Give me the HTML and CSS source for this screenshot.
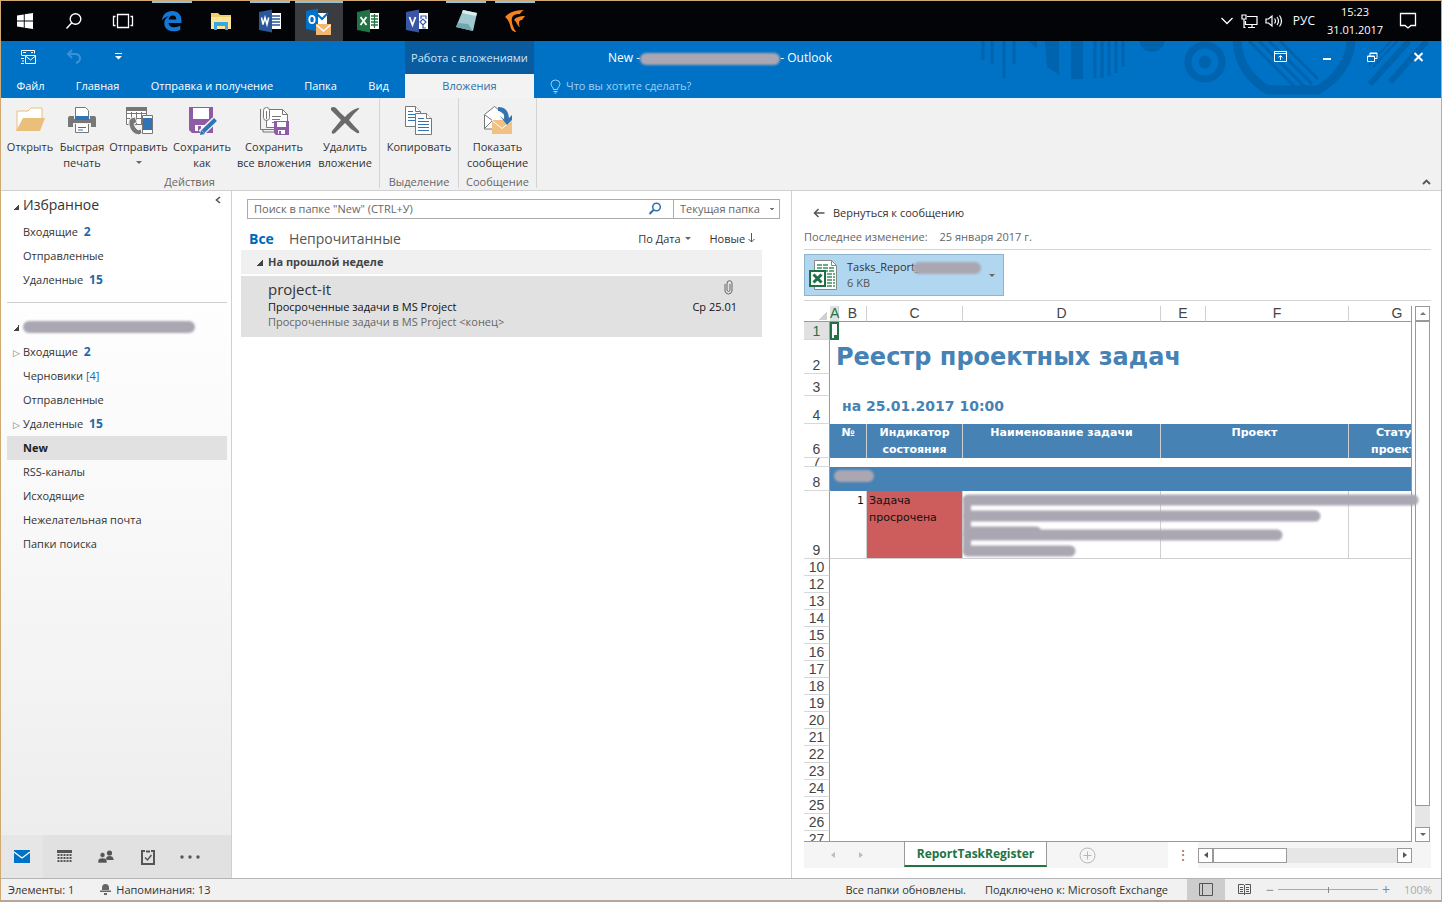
FILE: index.html
```html
<!DOCTYPE html>
<html lang="ru">
<head>
  <meta charset="UTF-8">
  <meta name="viewport" content="width=device-width, initial-scale=1.0">
  <title>New - Outlook</title>
  <link rel="stylesheet" href="styles.css">
</head>
<body>

  <!-- Windows taskbar -->
  <div class="taskbar">
    <div class="apps">
      <button class="app" aria-label="Пуск"><svg width="18" height="18" viewBox="0 0 18 18" fill="#fff"><path d="M1 3.400l6.800-1v6.100H1zM8.700 2.200L17 1v7.500H8.700zM1 9.500h6.800v6.100L1 14.600zM8.700 9.500H17V17l-8.300-1.200z"/></svg></button>
      <button class="app" aria-label="Поиск"><svg width="18" height="18" viewBox="0 0 18 18" fill="none" stroke="#fff" stroke-width="1.400"><circle cx="10.500" cy="7" r="5.300"/><path d="M6.800 10.800L1.500 16.500"/></svg></button>
      <button class="app" aria-label="Представление задач"><svg width="22" height="16" viewBox="0 0 22 16" fill="none" stroke="#fff" stroke-width="1.300"><path d="M5.500 1.500h11v13h-11zM3.500 3.500H1.500v9h2M18.500 3.500h2v9h-2"/></svg></button>
      <button class="app open" aria-label="Edge"><svg width="22" height="22" viewBox="0 0 22 22"><path fill="#1479d6" d="M1 10.500C1.600 4.500 5.600 1 11.200 1 17 1 20.500 5 20.500 10.300V13H7.600c.2 3 2.800 4.300 5.700 4.300 2.300 0 4.200-.6 6-1.700v4.100c-2 1.200-4.300 1.600-6.800 1.600C7 21.300 3.300 18 3.300 13.200c0-3 1.700-5.600 4.500-7C4.800 6.700 2.500 8 1 10.500zM7.700 9.500h7.600c0-2.400-1.200-3.900-3.500-3.900-2.200 0-3.700 1.600-4.100 3.900z"/></svg></button>
      <button class="app" aria-label="Проводник"><svg width="22" height="20" viewBox="0 0 22 20"><path fill="#f3ce6c" d="M1 2h7l2 2h11v14H1z"/><path fill="#ffe69b" d="M1 6h20v12H1z"/><path fill="#38a9de" d="M4 11h14v8h-3v-4H7v4H4z"/></svg></button>
      <button class="app open" aria-label="Word"><svg width="24" height="24" viewBox="0 0 24 24"><path fill="#fff" d="M12 4h11v16H12z"/><path stroke="#2b579a" stroke-width="1.300" d="M14 7h8M14 10h8M14 13h8M14 16h8"/><path fill="#2b579a" d="M1 3l13-2.500v23L1 21z"/><path fill="none" stroke="#fff" stroke-width="1.500" d="M3.500 8.500l1.500 7 2-7 2 7 1.700-7"/></svg></button>
      <button class="app open active" aria-label="Outlook"><svg width="28" height="28" viewBox="0 0 28 28"><path fill="#fff" d="M12 6h10v11H12z"/><path fill="none" stroke="#0072c6" stroke-width="2" d="M12 7l5 5 6-6"/><path fill="#0072c6" d="M1 4l12-2.500v23L1 22z"/><ellipse cx="7" cy="12.500" rx="2.700" ry="3.600" fill="none" stroke="#fff" stroke-width="1.800"/><path fill="#f2b872" d="M11 17h15v11H11z"/><path fill="none" stroke="#fff" stroke-width="1.500" d="M11.500 18l7 6 7-6"/></svg></button>
      <button class="app" aria-label="Excel"><svg width="24" height="24" viewBox="0 0 24 24"><path fill="#fff" d="M12 4h11v16H12z"/><path stroke="#217346" stroke-width="1.300" d="M15 7h7M15 10h7M15 13h7M15 16h7M18.500 5v14"/><path fill="#217346" d="M1 3l13-2.500v23L1 21z"/><path stroke="#fff" stroke-width="1.800" d="M4.500 8l6 8M10.500 8l-6 8"/></svg></button>
      <button class="app" aria-label="Visio"><svg width="24" height="24" viewBox="0 0 24 24"><path fill="#fff" d="M12 4h11v16H12z"/><path fill="none" stroke="#3955a3" stroke-width="1.200" d="M15 13l3-3 3 3-3 3zM16 10V7h5v3M18 16v3h3"/><path fill="#3955a3" d="M1 3l13-2.500v23L1 21z"/><path fill="none" stroke="#fff" stroke-width="1.800" d="M4.500 8l3 8 3-8"/></svg></button>
      <button class="app open" aria-label="Блокнот"><svg width="24" height="24" viewBox="0 0 24 24"><path fill="#9fc9cf" d="M9 1l14 3-4 18-17-4z"/><path fill="#d9eff0" d="M9 1l14 3-1 3L8 4z"/><path fill="#6fa5ae" d="M4 14l10 1 5 7-17-4z"/></svg></button>
      <button class="app open" aria-label="Приложение"><svg width="22" height="25" viewBox="0 0 22 25" fill="#f58220"><path d="M1 8C5 3 12 1 20 1c-2 1-3 2-4 4-5 0-7 1-8 4-1 5 1 9 4 14-3 0-5-2-6-7C5 13 4 10 1 8z"/><path d="M10 11c2-3 6-4 11-4l-3 4c-2 0-3 1-3 3 0 1 0 2 1 4-3-1-3-5-6-7z"/></svg></button>
    </div>
    <div class="tray">
      <svg width="14" height="8" viewBox="0 0 14 8" fill="none" stroke="#fff" stroke-width="1.300"><path d="M1.500 1L7 6.500 12.500 1"/></svg>
      <svg width="17" height="15" viewBox="0 0 17 15" fill="none" stroke="#fff" stroke-width="1.200"><path d="M6 2.500h10v8H4.500V7M11 10.500v3M7 13.500h7M1 1h4v4H1zM3 5v8.500h1.500"/></svg>
      <svg width="18" height="14" viewBox="0 0 18 14" fill="none" stroke="#fff" stroke-width="1.200"><path d="M1 5h2.500L7 2v10L3.500 9H1zM9.500 4.500q2 2.500 0 5M12 3q3 4 0 8M14.500 1.500q4 5.500 0 11"/></svg>
      <span class="lang">РУС</span>
      <time class="clock">15:23<br>31.01.2017</time>
      <svg width="18" height="18" viewBox="0 0 18 18" fill="none" stroke="#fff" stroke-width="1.300"><path d="M1.500 1.500h15v12h-4.500L9 16l-3-2.500H1.500z"/></svg>
    </div>
  </div>

  <!-- Window title and ribbon tabs -->
  <header class="titlebar">
    <svg class="pattern" width="462" height="57" viewBox="0 0 462 57" fill="none" stroke="#0063ae">
      <path stroke-width="3" d="M4 0v19M13 0v23M25 0v37M35 0v23M116 0v37M123 0v37M130 0v35M137 0v32M144 0v26"/>
      <path fill="#0063ae" stroke="none" d="M50 0l8 8V0zM66 0h14v34L68 26zM92 0h12v38H92zM160 0h26q-3 11-13 11T160 0z"/>
      <circle cx="226" cy="21" r="17" stroke-width="7"/><circle cx="226" cy="21" r="6" fill="#0063ae"/>
      <path stroke-width="9" d="M258 0q2 32 31 49h50Q370 30 372 0"/>
      <path stroke-width="3" d="M270 0l46 46M280 0l46 46M290 0l43 43M301 0l38 38"/>
      <path stroke-width="6" d="M430 0l-39 43M448 0l-37 41"/><path stroke-width="2" d="M418 0l-24 26M412 0l-22 24"/>
    </svg>
    <div class="title-row">
      <div class="quick-access">
        <button aria-label="Отправить и получить"><svg width="17" height="16" viewBox="0 0 17 16" fill="none" stroke="#fff"><path d="M1.500 6.500v-5h13v3M3 3.500h3M11 3.500h2M5.500 6.500h10v8h-10zM5.500 7l5 4 5-4M1 9.500h3M2 12h2M1 14.500h3M2 6.500h3"/></svg></button>
        <button aria-label="Отменить"><svg width="16" height="15" viewBox="0 0 16 15" fill="none" stroke="#3c91d4" stroke-width="2"><path d="M6 1L2 5l4 4M2.500 5H9q5 0 5 4.500 0 3-4 4.500"/></svg></button>
        <button aria-label="Настройка панели"><svg width="7" height="7" viewBox="0 0 7 7" fill="#fff"><path d="M0 0h7v1H0zM0 3h7L3.500 6.500z"/></svg></button>
      </div>
      <div class="context-title">Работа с вложениями</div>
      <h1 class="window-title">New - <span class="smudge"></span> - Outlook</h1>
      <div class="window-controls">
        <button aria-label="Параметры ленты"><svg width="13" height="11" viewBox="0 0 13 11" fill="none" stroke="#fff"><path d="M.5.500h12v10H.5zM1 2.500h11M6.500 9V5M4.500 6.500l2-2 2 2"/></svg></button>
        <button aria-label="Свернуть"><svg width="10" height="10" viewBox="0 0 10 10"><path stroke="#fff" stroke-width="2" d="M1 7h8"/></svg></button>
        <button aria-label="Восстановить"><svg width="11" height="10" viewBox="0 0 11 10" fill="none" stroke="#fff"><path d="M.5 4h7v5.500h-7zM.5 4.500h7M3 4V1h7v5.500H7.500M3 1.500h7"/></svg></button>
        <button aria-label="Закрыть"><svg width="11" height="10" viewBox="0 0 11 10"><path stroke="#fff" stroke-width="2" d="M1.500 1l8 8M9.500 1l-8 8"/></svg></button>
      </div>
    </div>
    <nav class="tabs">
      <button>Файл</button>
      <button>Главная</button>
      <button>Отправка и получение</button>
      <button>Папка</button>
      <button>Вид</button>
      <button class="current">Вложения</button>
      <button class="hint"><svg width="11" height="15" viewBox="0 0 11 15" fill="none" stroke="#9fd0f2"><path d="M3.500 10.500Q3.500 9 2 7.500 1 6 1 4.500 1.500 1 5.500 1T10 4.500Q10 6 9 7.500 7.500 9 7.500 10.500zM3.500 12.500h4M4.500 14h2"/></svg>Что вы хотите сделать?</button>
    </nav>
  </header>

  <!-- Ribbon -->
  <div class="ribbon">
    <section class="group">
      <div class="actions">
        <button><svg width="32" height="32" viewBox="0 0 32 32"><path fill="#fff" stroke="#eabf7c" d="M3 27V7h11l3-3h11v10"/><path fill="#eabf7c" d="M2 27l7-13h22l-5 13z"/></svg>Открыть</button>
        <button><svg width="32" height="32" viewBox="0 0 32 32"><path fill="#fff" stroke="#777" d="M9.500 3.500h10l3 3v8h-13z"/><path fill="#777" d="M4 12h4v3h16v-3h4q2 0 2 2v9h-5v-4H7v4H2v-9q0-2 2-2z"/><path fill="#2f75b5" d="M9 12h14v4H9z"/><path fill="#fff" stroke="#777" d="M9.500 20v8.500h13V20"/><path stroke="#2f75b5" d="M12 23.500h8M12 26h5"/></svg>Быстрая печать</button>
        <button><svg width="32" height="32" viewBox="0 0 32 32"><path fill="#fff" stroke="#777" d="M3.500 4.500h20v16h-20z"/><path stroke="#777" d="M3 9.500h20M3 14.500h20M8.500 8v12M13.500 8v12M18.500 8v12"/><path fill="#777" d="M3 3h21v4H3z"/><path fill="#777" stroke="#f1f1f1" d="M8 14l4-1 2 5-3 2q1 4 4 6l3-1 1 4-3 2Q8 30 6 21q-1-5 2-7z"/><path fill="#fff" stroke="#777" d="M19.500 11.500h10v18h-10z"/><path fill="#2f75b5" d="M20 14h9v12h-9z"/></svg>Отправить <i class="arrow"></i></button>
        <button><svg width="32" height="32" viewBox="0 0 32 32"><path fill="#8e5ba6" d="M3 3h24v26H6l-3-3z"/><path fill="#fff" d="M7 4h16v11H7zM9 21h12v6H9z"/><path fill="#8e5ba6" d="M12 22h3v5h-3z"/><path stroke="#f1f1f1" stroke-width="7" d="M15 29L30 15"/><path stroke="#2f75b5" stroke-width="4" d="M17 27.500L29.500 15.500"/><path fill="#2f75b5" d="M14 31l1-5 4 4z"/></svg>Сохранить как</button>
        <button><svg width="32" height="32" viewBox="0 0 32 32" fill="none" stroke="#777"><path fill="#fff" d="M8.500 5.500h16l5 5v13h-21z"/><path d="M24.500 5.500v5h5M14 12.500h9M14 15.500h8M14 18.500h3M2.500 5v20.500h14M5 25v3h11"/><rect x="5.500" y="3.500" width="6" height="13" rx="3" fill="#fff"/><path d="M8.500 7v8"/><path fill="#8e5ba6" stroke="none" d="M16 17h15v14H18l-2-2z"/><path fill="#fff" stroke="none" d="M19 18h9v5h-9zM20 26h7v4h-7z"/><path fill="#8e5ba6" stroke="none" d="M21 27h2v3h-2z"/></svg>Сохранить<br>все вложения</button>
        <button><svg width="32" height="32" viewBox="0 0 32 32" fill="#6a6a6a"><path d="M2 4q2-2 5 0 4 5 9 9Q22 6 29 4q2 0 1 1-6 5-10 11 5 6 10 11 1 3-2 2-7-4-12-10Q10 25 6 29q-4 2-3-2 5-6 9-11Q6 10 2 6z"/></svg>Удалить вложение</button>
      </div>
      <h2>Действия</h2>
    </section>
    <section class="group">
      <div class="actions">
        <button><svg width="32" height="32" viewBox="0 0 32 32" fill="#fff" stroke="#777"><path d="M2.500 2.500h10l5 5v15h-15z"/><path d="M12.500 2.500v5h5"/><path stroke="#2f75b5" d="M5 7.500h5M5 10.500h8M5 13.500h8M5 16.500h8"/><path d="M12.500 9.500h11l5 5v16h-16z"/><path d="M23.500 9.500v5h5"/><path stroke="#2f75b5" d="M15 14.500h6M15 17.500h11M15 20.500h11M15 23.500h11M15 26.500h11"/></svg>Копировать</button>
      </div>
      <h2>Выделение</h2>
    </section>
    <section class="group">
      <div class="actions">
        <button><svg width="32" height="32" viewBox="0 0 32 32"><path fill="#fff" stroke="#777" d="M2.500 25V10.500l10-8 10 8V25z"/><path fill="none" stroke="#777" d="M3 11l8 6M3 24l8-8"/><path fill="#f0c183" d="M10 16h20v14H10z"/><path fill="none" stroke="#fff" d="M10 16.500l10 8 10-8"/><path fill="none" stroke="#2f75b5" stroke-width="4" d="M16 5q9 0 9 11"/><path fill="#2f75b5" d="M18 12l5 4h2l5-5v5l-5 5z"/></svg>Показать сообщение</button>
      </div>
      <h2>Сообщение</h2>
    </section>
    <button class="collapse" aria-label="Свернуть ленту"><svg width="9" height="6" viewBox="0 0 9 6" fill="none" stroke="#555" stroke-width="1.800"><path d="M1 5l3.500-3.500L8 5"/></svg></button>
  </div>

  <main class="panes">
    <!-- Folders -->
    <aside class="folders">
      <button class="hide-pane" aria-label="Свернуть область папок"><svg width="6" height="8" viewBox="0 0 6 8" fill="none" stroke="#555" stroke-width="1.600"><path d="M5 1L1.500 4 5 7"/></svg></button>
      <div class="folder-tree">
        <h2 class="expanded">Избранное</h2>
        <ul>
          <li><a href="#">Входящие <b>2</b></a></li>
          <li><a href="#">Отправленные</a></li>
          <li><a href="#">Удаленные <b>15</b></a></li>
        </ul>
        <hr>
        <h2 class="expanded account"><span class="smudge"></span></h2>
        <ul>
          <li class="closed"><a href="#">Входящие <b>2</b></a></li>
          <li><a href="#">Черновики <span class="count">[4]</span></a></li>
          <li><a href="#">Отправленные</a></li>
          <li class="closed"><a href="#">Удаленные <b>15</b></a></li>
          <li class="selected"><a href="#">New</a></li>
          <li><a href="#">RSS-каналы</a></li>
          <li><a href="#">Исходящие</a></li>
          <li><a href="#">Нежелательная почта</a></li>
          <li><a href="#">Папки поиска</a></li>
        </ul>
      </div>
      <nav class="modules">
        <button class="on" aria-label="Почта"><svg width="16" height="13" viewBox="0 0 16 13"><path fill="#0072c6" d="M0 0h16v13H0z"/><path fill="none" stroke="#fff" stroke-width="1.300" d="M0 2l8 6 8-6"/></svg></button>
        <button aria-label="Календарь"><svg width="15" height="13" viewBox="0 0 15 13"><path fill="#555" d="M0 0h15v3H0z"/><path stroke="#555" stroke-width="2" stroke-dasharray="2 1" d="M.5 5h14M.5 8h14M.5 11h14"/></svg></button>
        <button aria-label="Люди"><svg width="16" height="13" viewBox="0 0 16 13" fill="#555"><circle cx="11.500" cy="3" r="2.600"/><path d="M8 9q0-3 3.500-3T15.500 9v1H8z"/><circle cx="4.500" cy="5" r="2.500" stroke="#e1e1e1" stroke-width=".6"/><path d="M0 13v-2q0-3 4.500-3T9 11v2z" stroke="#e1e1e1" stroke-width=".6"/></svg></button>
        <button aria-label="Задачи"><svg width="14" height="16" viewBox="0 0 14 16" fill="none" stroke="#555" stroke-width="2"><path d="M4 2H1v13h12V2h-3"/><path d="M5 2.500h4"/><path stroke-width="1.500" d="M4 8.500l2.500 2.500 4-5"/></svg></button>
        <button aria-label="Ещё"><svg width="20" height="4" viewBox="0 0 20 4" fill="#555"><circle cx="2" cy="2" r="1.700"/><circle cx="10" cy="2" r="1.700"/><circle cx="18" cy="2" r="1.700"/></svg></button>
      </nav>
    </aside>

    <!-- Message list -->
    <section class="messages">
      <form class="search">
        <input type="search" aria-label="Поиск" placeholder='Поиск в папке "New" (CTRL+У)'>
        <button type="button" aria-label="Найти"><svg width="14" height="14" viewBox="0 0 14 14" fill="none" stroke="#2f6fb0" stroke-width="1.500"><circle cx="8.500" cy="5" r="3.800"/><path stroke-width="2" d="M5.500 8L1.500 12"/></svg></button>
        <select aria-label="Область поиска"><option>Текущая папка</option></select>
      </form>
      <div class="filters">
        <button class="all">Все</button>
        <button class="unread">Непрочитанные</button>
        <button class="sort">По Дата <i class="arrow"></i></button>
        <button class="order">Новые <svg width="7" height="10" viewBox="0 0 7 10" fill="none" stroke="#555"><path d="M3.500 0v9M.5 6l3 3 3-3"/></svg></button>
      </div>
      <h3 class="expanded">На прошлой неделе</h3>
      <article class="message">
        <div class="sender">project-it <svg width="9" height="15" viewBox="0 0 9 15" fill="none" stroke="#666"><path d="M6 4v6.500q-1.500 2-3 0V3q.2-2.300 2.500-2.300T8 3v8q-.5 3-3.500 3T1 11V4"/></svg></div>
        <div class="subject">Просроченные задачи в MS Project <time>Ср 25.01</time></div>
        <div class="snippet">Просроченные задачи в MS Project &lt;конец&gt;</div>
      </article>
    </section>

    <!-- Attachment preview -->
    <section class="preview">
      <button class="back"><svg width="12" height="10" viewBox="0 0 12 10" fill="none" stroke="#555" stroke-width="1.500"><path d="M11.500 5H1.500M5.500 1l-4 4 4 4"/></svg>Вернуться к сообщению</button>
      <p class="changed"><span>Последнее изменение:</span><span>25 января 2017 г.</span></p>
      <div class="attachments">
        <button class="file">
          <svg width="30" height="32" viewBox="0 0 30 32"><path fill="#fff" stroke="#888" d="M5.500 1.500h17l5 5v24h-22z"/><path fill="none" stroke="#888" d="M22.500 1.500v5h5"/><path stroke="#6dab86" stroke-width="2" stroke-dasharray="5 1" d="M8 6h12M8 9h18M14 12h12M18 15h8M18 18h8M18 21h8M18 24h8M18 27h8"/><path fill="#fff" stroke="#1e7145" stroke-width="2" d="M1 12h15v15H1z"/><path stroke="#1e7145" stroke-width="3" d="M4.500 15.500l8 8M12.500 15.500l-8 8"/></svg>
          <span class="file-name">Tasks_Report_<span class="smudge"></span><small>6 KB</small></span>
          <i class="arrow"></i>
        </button>
      </div>
      <div class="workbook">
        <div class="sheet">
          <table>
            <colgroup><col class="c-num"><col class="c-a"><col class="c-b"><col class="c-c"><col class="c-d"><col class="c-e"><col class="c-f"><col class="c-g"></colgroup>
            <thead>
              <tr><th class="corner"></th><th class="picked">A</th><th>B</th><th>C</th><th>D</th><th>E</th><th>F</th><th>G</th></tr>
            </thead>
            <tbody>
              <tr class="r1"><th class="picked">1</th><td class="cursor"></td><td colspan="6"></td></tr>
              <tr class="r2"><th>2</th><td class="report-title" colspan="7">Реестр проектных задач</td></tr>
              <tr class="r3"><th>3</th><td colspan="7"></td></tr>
              <tr class="r4"><th>4</th><td class="report-date" colspan="7">на 25.01.2017 10:00</td></tr>
              <tr class="r6 heads"><th>6</th><td colspan="2">№</td><td>Индикатор состояния</td><td>Наименование задачи</td><td colspan="2">Проект</td><td>Статус<br>проекта</td></tr>
              <tr class="r7"><th><div>7</div></th><td colspan="7"></td></tr>
              <tr class="r8"><th>8</th><td class="band" colspan="7"><span class="smudge"></span></td></tr>
              <tr class="r9"><th>9</th><td class="number" colspan="2">1</td><td class="overdue">Задача просрочена</td><td></td><td colspan="2"></td><td></td></tr>
              <tr><th>10</th><td colspan="7"></td></tr>
              <tr><th>12</th><td colspan="7"></td></tr>
              <tr><th>13</th><td colspan="7"></td></tr>
              <tr><th>14</th><td colspan="7"></td></tr>
              <tr><th>15</th><td colspan="7"></td></tr>
              <tr><th>16</th><td colspan="7"></td></tr>
              <tr><th>17</th><td colspan="7"></td></tr>
              <tr><th>18</th><td colspan="7"></td></tr>
              <tr><th>19</th><td colspan="7"></td></tr>
              <tr><th>20</th><td colspan="7"></td></tr>
              <tr><th>21</th><td colspan="7"></td></tr>
              <tr><th>22</th><td colspan="7"></td></tr>
              <tr><th>23</th><td colspan="7"></td></tr>
              <tr><th>24</th><td colspan="7"></td></tr>
              <tr><th>25</th><td colspan="7"></td></tr>
              <tr><th>26</th><td colspan="7"></td></tr>
              <tr><th>27</th><td colspan="7"></td></tr>
            </tbody>
          </table>
        </div>
        <div class="v-scroll">
          <button aria-label="Вверх"><i class="up"></i></button>
          <div class="v-thumb"></div>
          <button aria-label="Вниз"><i class="down"></i></button>
        </div>
        <svg class="strokes" width="620" height="70" viewBox="0 0 620 70" fill="none" stroke="#aaa7b3" stroke-width="11" stroke-linecap="round" stroke-linejoin="round"><path d="M164 12h445M164 28h347M164 47h309M164 63h102M164 44h68"/><path stroke-width="8" d="M163 12v50"/></svg>
      </div>
      <div class="sheet-tabs">
        <div class="sheet-nav"><i class="left"></i><i class="right"></i></div>
        <button class="sheet-tab">ReportTaskRegister</button>
        <button class="add-sheet" aria-label="Новый лист"><svg width="17" height="17" viewBox="0 0 17 17" fill="none" stroke="#b5b5b5"><circle cx="8.500" cy="8.500" r="7.500"/><path d="M8.500 4.500v8M4.500 8.500h8"/></svg></button>
        <span class="grip">⋮</span>
        <div class="h-scroll">
          <button aria-label="Влево"><i class="left"></i></button>
          <div class="h-track"><div class="h-thumb"></div></div>
          <button aria-label="Вправо"><i class="right"></i></button>
        </div>
      </div>
    </section>
  </main>

  <footer class="statusbar">
    <span>Элементы: 1</span>
    <span class="reminders"><svg width="11" height="11" viewBox="0 0 11 11" fill="#666"><path d="M2 6V4q0-4 3.500-4T9 4v2zM0 6.500h11V8H0zM4 9h3v2H4z"/></svg>Напоминания: 13</span>
    <span class="sync">Все папки обновлены.</span>
    <span>Подключено к: Microsoft Exchange</span>
    <div class="views">
      <button class="on" aria-label="Обычный"><svg width="14" height="13" viewBox="0 0 14 13" fill="none" stroke="#555"><path d="M.5.500h13v12H.5zM3.500 0v13"/></svg></button>
      <button aria-label="Чтение"><svg width="13" height="13" viewBox="0 0 13 13" fill="none" stroke="#555"><path d="M.5 1.500h5l1 1 1-1h5v9h-5l-1 1-1-1h-5zM6.500 2v10M2 4.500h3M2 6.500h3M2 8.500h3M8 4.500h3M8 6.500h3M8 8.500h3"/></svg></button>
    </div>
    <div class="zoom">
      <button>−</button>
      <input type="range" aria-label="Масштаб" disabled>
      <button>+</button>
      <span>100%</span>
    </div>
  </footer>

</body>
</html>
```

FILE: styles.css
```css
* {
  margin: 0;
  padding: 0;
  box-sizing: border-box;
}

body {
  height: 100vh;
  display: flex;
  flex-direction: column;
  border: 1px solid #d0a871;
  border-bottom: 2px solid #b5a59a;
  background-color: #fff;
  font-family: "Open Sans", "Noto Sans", sans-serif;
  font-size: 11px;
  line-height: 16px;
  color: #333;
  overflow: hidden;
}

button, input, select {
  font: inherit;
  color: inherit;
  background: none;
  border: none;
}

a {
  color: inherit;
  text-decoration: none;
}

ul {
  list-style: none;
}

/* Blurred-out private text */
.smudge {
  display: inline-block;
  height: 12px;
  border-radius: 6px;
  background-color: #aaa7b3;
  filter: blur(1px);
  vertical-align: middle;
}

/* Small triangles */
.arrow, .down, .up, .left, .right {
  display: inline-block;
  border: 3px solid transparent;
}

.arrow, .down {
  border-top-color: #666;
  border-bottom-width: 0;
}

.up {
  border-bottom-color: #777;
  border-top-width: 0;
}

.left {
  border-right: 4px solid #555;
  border-left-width: 0;
}

.right {
  border-left: 4px solid #555;
  border-right-width: 0;
}

/* Taskbar */
.taskbar {
  display: flex;
  justify-content: space-between;
  height: 40px;
  flex-shrink: 0;
  background-color: #020407;
  color: #fff;
}

.apps {
  display: flex;
  gap: 1px;
}

.app {
  width: 48px;
  display: flex;
  align-items: center;
  justify-content: center;
}

.app.open {
  background: linear-gradient(#8fc0e0, #8fc0e0) center top / 40px 2px no-repeat;
}

.app.active {
  background: linear-gradient(#8fc0e0, #8fc0e0) center top / 48px 2px no-repeat #3a3c3f;
}

.tray {
  display: flex;
  align-items: center;
  gap: 7px;
  padding-right: 24px;
}

.lang {
  margin-left: 3px;
  font-size: 12px;
}

.clock {
  width: 58px;
  margin: 0 8px 0 4px;
  text-align: center;
  line-height: 18px;
}

/* Title bar */
.titlebar {
  position: relative;
  flex-shrink: 0;
  background-color: #0072c6;
  color: #fff;
}

.pattern {
  position: absolute;
  top: 0;
  right: 0;
}

.title-row {
  position: relative;
  display: grid;
  grid-template-columns: 404px 129px 1fr auto;
  height: 33px;
}

.quick-access {
  display: flex;
  align-items: center;
  gap: 29px;
  padding: 0 0 3px 19px;
}

.quick-access button, .window-controls button {
  display: flex;
}

.quick-access button:last-child {
  margin-left: 4px;
}

.context-title {
  background-color: #085c9f;
  color: #cfe6f7;
  line-height: 34px;
  text-align: center;
}

.window-title {
  padding-left: 74px;
  font-size: 12px;
  font-weight: normal;
  line-height: 33px;
}

.window-title .smudge {
  width: 140px;
  margin: 0 -3px;
}

.window-controls {
  display: flex;
  align-items: center;
  gap: 35px;
  padding: 0 17px 3px 0;
}

.tabs {
  position: relative;
  display: grid;
  grid-template-columns: 59px 75px 154px 63px 53px 129px 1fr;
  height: 24px;
}

.tabs button {
  white-space: nowrap;
}

.tabs .current {
  background-color: #f3f3f3;
  color: #2b6ea8;
}

.tabs .hint {
  display: flex;
  align-items: center;
  gap: 5px;
  padding-left: 16px;
  color: #9fd0f2;
}

/* Ribbon */
.ribbon {
  display: flex;
  flex-shrink: 0;
  height: 93px;
  padding-left: 2px;
  background-color: #f1f1f1;
  border-bottom: 1px solid #d0d0d0;
}

.group {
  display: flex;
  flex-direction: column;
  justify-content: space-between;
  padding: 6px 3px 0;
  margin-bottom: 2px;
  border-right: 1px solid #d4d4d4;
}

.group:first-child {
  padding-left: 0;
}

.actions {
  display: grid;
  grid-template-columns: 54px 50px 63px 64px 80px 62px;
}

.group + .group .actions {
  grid-template-columns: 72px;
}

.group:nth-child(3) .actions {
  grid-template-columns: 71px;
}

.actions button {
  display: flex;
  flex-direction: column;
  align-items: center;
}

.actions svg {
  margin-bottom: 3px;
}

.actions .arrow {
  margin-top: 6px;
}

.group h2 {
  font-size: 11px;
  font-weight: normal;
  line-height: 12px;
  text-align: center;
  color: #666;
}

.collapse {
  align-self: flex-end;
  margin: 0 10px 5px auto;
}

.collapse svg {
  display: block;
}

/* Panes */
.panes {
  display: grid;
  grid-template-columns: 231px 560px 1fr;
  flex: 1;
  min-height: 0;
}

.folders {
  position: relative;
  display: flex;
  flex-direction: column;
  border-right: 1px solid #d0d0d0;
  background: linear-gradient(#fff 10%, #f8f8f8 50%, #ececec);
}

.hide-pane {
  position: absolute;
  top: 5px;
  right: 10px;
  display: flex;
}

.folder-tree {
  flex: 1;
  padding: 0 4px 0 6px;
}

.folder-tree h2 {
  height: 29px;
  padding-left: 16px;
  font-size: 14px;
  font-weight: normal;
  line-height: 28px;
}

.folder-tree li {
  height: 24px;
  padding-left: 16px;
  line-height: 24px;
}

.folder-tree b {
  margin-left: 3px;
  font-size: 12px;
  color: #2068a8;
}

.count {
  color: #2068a8;
}

.folder-tree hr {
  margin: 10px 0 11px;
  border: none;
  border-top: 1px solid #d0d0d0;
}

.folder-tree .account {
  height: 26px;
  line-height: 24px;
}

.account .smudge {
  width: 172px;
}

.folder-tree .selected {
  background-color: #e1e1e1;
  font-weight: bold;
  color: #222;
}

.expanded::before {
  content: "";
  display: inline-block;
  width: 6px;
  height: 6px;
  margin-left: -10px;
  margin-right: 4px;
  background: linear-gradient(135deg, transparent 50%, #444 50%);
}

.closed::before {
  content: "▷";
  display: inline-block;
  width: 10px;
  margin-left: -10px;
  font-family: "DejaVu Sans", sans-serif;
  font-size: 9px;
  color: #777;
}

.modules {
  display: flex;
  height: 43px;
  background-color: #e1e1e1;
}

.modules button {
  width: 42px;
  display: flex;
  align-items: center;
  justify-content: center;
}

.modules .on {
  background-color: #e6e6e6;
}

/* Message list */
.messages {
  padding: 8px 11px 0 9px;
  border-right: 1px solid #d0d0d0;
}

.search {
  display: flex;
  height: 20px;
  margin-left: 6px;
  border: 1px solid #ababab;
}

.search input {
  flex: 1;
  padding-left: 6px;
}

.search input::placeholder {
  color: #666;
  opacity: 1;
}

.search button {
  display: flex;
  align-items: center;
  padding: 0 11px;
}

.search select {
  width: 106px;
  padding-left: 6px;
  border-left: 1px solid #ababab;
  appearance: none;
  color: #666;
  background: linear-gradient(45deg, transparent 50%, #777 50%) 95px 8px / 3px 3px no-repeat,
    linear-gradient(-45deg, transparent 50%, #777 50%) 98px 8px / 3px 3px no-repeat;
}

.filters {
  display: flex;
  align-items: center;
  height: 31px;
  padding: 8px 25px 0 8px;
}

.filters .all {
  font-size: 14px;
  font-weight: bold;
  color: #0068b8;
}

.filters .unread {
  margin: 0 auto 0 15px;
  font-size: 14px;
  color: #555;
}

.filters .arrow {
  margin: 0 0 3px 2px;
}

.filters .order {
  margin-left: 18px;
}

.messages h3 {
  width: 521px;
  max-width: 100%;
  height: 24px;
  margin-bottom: 2px;
  padding-left: 27px;
  background-color: #f0f0f0;
  font-size: 11px;
  line-height: 24px;
  color: #444;
}

.messages h3::before {
  margin-right: 5px;
  margin-left: -11px;
}

.message {
  width: 521px;
  max-width: 100%;
  height: 61px;
  padding: 4px 25px 0 27px;
  background-color: #e1e1e1;
}

.message div {
  display: flex;
  justify-content: space-between;
}

.message .sender {
  padding-right: 4px;
  font-size: 15px;
  line-height: 19px;
}

.subject {
  color: #111;
  line-height: 15px;
}

.snippet {
  color: #666;
  line-height: 15px;
}

/* Attachment preview */
.preview {
  display: flex;
  flex-direction: column;
  min-width: 0;
  min-height: 0;
  padding: 14px 10px 10px 12px;
}

.back {
  display: flex;
  align-items: center;
  gap: 8px;
  padding-left: 9px;
}

.changed {
  display: flex;
  gap: 12px;
  padding: 8px 0 4px;
  color: #666;
}

.attachments {
  padding: 4px 0;
  border-top: 1px solid #d4d4d4;
  border-bottom: 1px solid #d4d4d4;
}

.file {
  display: flex;
  align-items: center;
  width: 200px;
  height: 42px;
  padding: 0 8px 0 4px;
  gap: 8px;
  background-color: #b1d6f0;
  border: 1px solid #8fb4d0;
  text-align: left;
}

.file svg {
  flex-shrink: 0;
}

.file-name {
  flex: 1;
  min-width: 0;
  white-space: nowrap;
}

.file-name .smudge {
  width: 68px;
  margin-left: -7px;
}

.file-name small {
  display: block;
  font-size: 11px;
  color: #555;
}

.workbook {
  position: relative;
  display: flex;
  gap: 3px;
  flex: 1;
  min-height: 0;
  margin-top: 5px;
}

.sheet {
  flex: 1;
  min-width: 0;
  overflow: hidden;
  border-right: 1px solid #999;
  border-bottom: 1px solid #999;
}

.sheet table {
  width: 642px;
  table-layout: fixed;
  border-collapse: separate;
  border-spacing: 0;
  font-family: "DejaVu Sans", sans-serif;
  font-size: 11px;
  line-height: 17px;
  color: #111;
}

.c-num { width: 26px; }
.c-a { width: 9px; }
.c-b { width: 28px; }
.c-c { width: 96px; }
.c-d { width: 198px; }
.c-e { width: 45px; }
.c-f { width: 143px; }
.c-g { width: 97px; }

.sheet th {
  border-right: 1px solid #d0d0d0;
  font-family: "Liberation Sans", sans-serif;
  font-size: 14px;
  font-weight: normal;
  line-height: 15px;
  color: #444;
  vertical-align: bottom;
}

.sheet thead th {
  height: 16px;
  border-bottom: 1px solid #999;
}

.sheet thead .corner {
  border-right: none;
  background: linear-gradient(135deg, transparent 50%, #d0d0d0 50%) 14px 5px / 9px 9px no-repeat;
}

.sheet tbody th {
  height: 17px;
  border-right-color: #999;
  border-bottom: 1px solid #d8d8d8;
}

.sheet th.picked {
  background-color: #e1e1e1;
  color: #217346;
}

.sheet td {
  vertical-align: top;
}

.sheet .r1 th { height: 18px; }
.sheet .r2 th { height: 34px; }
.sheet .r3 th { height: 22px; }
.sheet .r4 th { height: 28px; }
.sheet .r6 th { height: 34px; }
.sheet .r7 th { height: 9px; }
.sheet .r8 th { height: 24px; }
.sheet .r9 th { height: 68px; }

.r7 div {
  height: 8px;
  overflow: hidden;
  line-height: 8px;
}

/* Active cell with its fill handle */
.cursor {
  border: 2px solid #217346;
  background: linear-gradient(#217346, #217346) right bottom / 3px 3px no-repeat;
}

.sheet .report-title {
  padding-left: 6px;
  font-size: 24px;
  font-weight: bold;
  line-height: 34px;
  color: #4682b4;
}

.sheet .report-date {
  padding-left: 12px;
  font-size: 14px;
  font-weight: bold;
  line-height: 20px;
  color: #4682b4;
}

.sheet .heads td {
  background-color: #4682b4;
  border-right: 1px solid #d0d0d0;
  font-weight: bold;
  text-align: center;
  color: #fff;
}

.sheet .band {
  background-color: #4682b4;
}

.band .smudge {
  width: 40px;
  margin-left: 4px;
}

.r9 td {
  padding: 1px 2px 0;
  border-right: 1px solid #d0d0d0;
  border-bottom: 1px solid #d0d0d0;
}

.r9 .number {
  text-align: right;
}

.r9 .overdue {
  background-color: #cd5c5c;
}

.strokes {
  position: absolute;
  top: 182px;
  left: 0;
  filter: blur(1px);
}

.v-scroll {
  display: flex;
  flex-direction: column;
  width: 15px;
  margin-right: 1px;
  background-color: #e6e6e6;
}

.v-scroll button, .h-scroll button {
  display: flex;
  align-items: center;
  justify-content: center;
  width: 15px;
  height: 15px;
  border: 1px solid #999;
  background-color: #fff;
}

.v-thumb {
  flex: 1;
  margin-bottom: 21px;
  border: 1px solid #999;
  background-color: #fff;
}

.sheet-tabs {
  display: flex;
  height: 26px;
  background-color: #f5f5f5;
}

.sheet-nav {
  display: flex;
  align-items: center;
  gap: 24px;
  width: 100px;
  padding-left: 27px;
  opacity: 0.35;
}

.sheet-tab {
  width: 143px;
  height: 25px;
  border: 1px solid #999;
  border-top: none;
  border-bottom: 2px solid #217346;
  background-color: #fff;
  font-size: 12px;
  font-weight: bold;
  color: #217346;
}

.add-sheet {
  display: flex;
  align-items: center;
  margin-left: 32px;
}

.grip {
  width: 30px;
  margin-left: auto;
  background-color: #fff;
  text-align: center;
  font-size: 14px;
  line-height: 26px;
  color: #777;
}

.h-scroll {
  display: flex;
  align-items: center;
  width: 233px;
  padding-right: 19px;
}

.h-track {
  flex: 1;
  background-color: #e6e6e6;
}

.h-thumb {
  width: 74px;
  height: 15px;
  border: 1px solid #999;
  background-color: #fff;
}

/* Status bar */
.statusbar {
  display: flex;
  align-items: center;
  flex-shrink: 0;
  height: 22px;
  padding-left: 7px;
  background-color: #f1f1f1;
  border-top: 1px solid #b5b5b5;
}

.reminders {
  display: flex;
  align-items: center;
  gap: 5px;
  margin-left: 26px;
}

.sync {
  margin: 0 19px 0 auto;
}

.views {
  display: flex;
  height: 100%;
  margin-left: 19px;
}

.views button {
  display: flex;
  align-items: center;
  justify-content: center;
  width: 38px;
}

.views .on {
  background-color: #cdcdcd;
}

.zoom {
  display: flex;
  align-items: center;
  gap: 4px;
  padding: 0 9px 0 3px;
  color: #aaa;
}

.zoom button {
  width: 8px;
  font-size: 14px;
  color: #888;
}

.zoom input {
  width: 100px;
  height: 6px;
  appearance: none;
  background: linear-gradient(#aaa, #aaa) center / 100px 1px no-repeat;
}

.zoom input::-webkit-slider-thumb {
  appearance: none;
  width: 1px;
  height: 6px;
  background-color: #888;
}

.zoom span {
  margin-left: 10px;
}
```
